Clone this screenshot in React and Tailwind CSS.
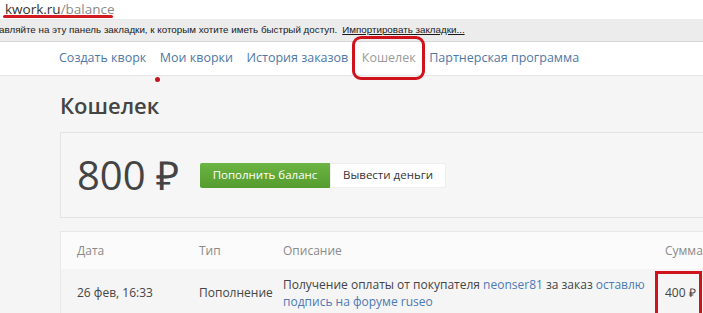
import React from 'react'

const navLinks = ['Создать кворк', 'Мои кворки', 'История заказов', 'Кошелек', 'Партнерская программа']

function AddressBar() {
  return (
    <div className="relative h-[19px] bg-white pl-[5px] pt-[1px] text-[13.5px] leading-[16px]">
      <span className="text-[#333]">kwork.ru</span>
      <span className="text-[#8a8a8a]">/balance</span>
      {/* red underline annotation */}
      <div className="absolute left-[3px] top-[15px] h-[3px] w-[110px] rounded-full bg-[#d11a22]" />
    </div>
  )
}

function BookmarkBar() {
  return (
    <div className="flex h-[23px] items-center whitespace-nowrap border-b border-[#d6d6d6] bg-[#ececec] font-['Liberation_Sans',sans-serif] text-[9.8px] text-[#1a1a1a]">
      <span className="-ml-[1px]">авляйте на эту панель закладки, к которым хотите иметь быстрый доступ.</span>
      <span className="ml-[5px] underline">Импортировать закладки...</span>
    </div>
  )
}

function Nav() {
  return (
    <div className="relative flex h-[34px] items-center gap-[13.5px] border-b border-[#e6e6e6] bg-white pl-[59px] text-[12.5px]">
      {navLinks.map((l) => (
        <span key={l} className={l === 'Кошелек' ? 'relative text-[#9a9a9a]' : 'text-[#4f78a6]'}>
          {l}
          {l === 'Кошелек' && (
            <span className="absolute -left-[10px] -right-[9px] -top-[13px] -bottom-[12px] rounded-[9px] border-[3px] border-[#d0121c]" />
          )}
        </span>
      ))}
      <div className="absolute left-[155px] top-[35px] h-[5px] w-[5px] rounded-full bg-[#c8141c]" />
    </div>
  )
}

export default function App() {
  return (
    <div className="h-[313px] w-[703px] overflow-hidden bg-[#f5f5f5] font-['Open_Sans',sans-serif]">
      <AddressBar />
      <BookmarkBar />
      <Nav />
      <div className="w-[760px] pl-[60px] pt-[14px]">
        <h1 className="text-[22px] font-semibold leading-[30px] text-[#444]">Кошелек</h1>

        <div className="mt-[12px] flex h-[86px] items-center border border-[#e4e4e4] bg-[#f6f6f6] pl-[16px]">
          <span className="mr-[21px] text-[40px] leading-none text-[#444]">800 ₽</span>
          <button className="h-[25px] w-[130px] rounded-l-[2px] bg-gradient-to-b from-[#6cb443] to-[#559c2f] text-[11.5px] text-white">
            Пополнить баланс
          </button>
          <button className="h-[25px] w-[116px] rounded-r-[2px] border border-[#eee] bg-white text-[11.5px] text-[#333]">
            Вывести деньги
          </button>
        </div>

        <div className="mt-[13px] border-t border-l border-[#e8e8e8] text-[12px]">
          <div className="flex h-[37px] items-center bg-[#fbfbfb] pl-[16px] text-[#8a8a8a]">
            <span className="w-[122px]">Дата</span>
            <span className="w-[84px]">Тип</span>
            <span className="w-[382px]">Описание</span>
            <span>Сумма</span>
          </div>
          <div className="flex h-[48px] items-center bg-[#f5f5f5] pl-[16px] text-[#444]">
            <span className="w-[122px]">26 фев, 16:33</span>
            <span className="w-[84px]">Пополнение</span>
            <span className="w-[382px] pr-[10px] leading-[17px]">
              Получение оплаты от покупателя <span className="text-[#4c7ab4]">neonser81</span> за заказ{' '}
              <span className="text-[#4c7ab4]">оставлю подпись на форуме ruseo</span>
            </span>
            <span className="relative">
              400 ₽
              <span className="absolute -left-[10px] -top-[13px] h-[50px] w-[47px] border-[3px] border-[#d0121c]" />
            </span>
          </div>
        </div>
      </div>
    </div>
  )
}
